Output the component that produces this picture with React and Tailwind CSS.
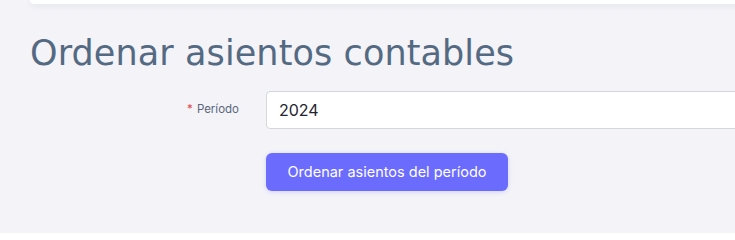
import React, { useState } from 'react';

export default function App() {
  const [period, setPeriod] = useState('2024');

  return (
    <div className="min-h-[233px] w-full overflow-hidden bg-[#f3f3f8]" style={{ fontFamily: 'Inter, "Noto Sans", sans-serif' }}>
      {/* top card, mostly scrolled off */}
      <div className="ml-[30px] mr-[-20px] h-[4px] rounded-bl-lg bg-white shadow-[0_2px_6px_rgba(30,40,80,0.08)]" />

      <div className="pl-[30px]">
        <h1 className="mt-[28px] text-[35px] leading-[42px] font-normal tracking-[0.1px] text-[#546a82]" style={{ fontFamily: '"DejaVu Sans", sans-serif' }}>
          Ordenar asientos contables
        </h1>

        <form className="mt-[17px]" onSubmit={(e) => e.preventDefault()}>
          <div className="flex items-center">
            <label className="w-[209px] shrink-0 text-right text-[11.5px] text-[#5b667a]">
              <span className="mr-1 text-[#e5484d]">*</span>Período
            </label>
            <input
              value={period}
              onChange={(e) => setPeriod(e.target.value)}
              className="ml-[27px] h-[38px] w-[520px] shrink-0 rounded-[4px] border border-[#d4d6de] bg-white px-[12px] text-[16px] text-[#1f2430] outline-none"
            />
          </div>

          <div className="mt-[24px] pl-[236px]">
            <button
              type="submit"
              className="h-[38px] w-[242px] rounded-[6px] bg-[#6b6bfe] text-[14.5px] text-white shadow-[0_1px_4px_rgba(107,107,254,0.25)]"
            >
              Ordenar asientos del período
            </button>
          </div>
        </form>
      </div>
    </div>
  );
}
